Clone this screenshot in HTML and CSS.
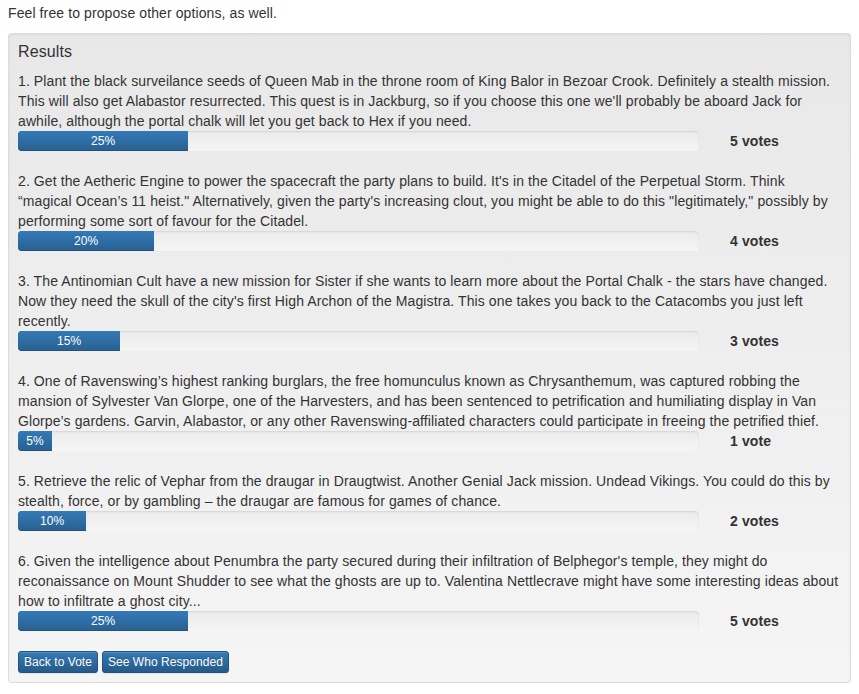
FILE: index.html
```html
<!DOCTYPE html>
<html>
<head>
<meta charset="utf-8">
<link rel="stylesheet" href="styles.css">
</head>
<body>
<p class="intro">Feel free to propose other options, as well.</p>
<div class="well">
  <h4 class="title">Results</h4>

  <div class="item">
    <p class="desc">1. Plant the black surveilance seeds of Queen Mab in the throne room of King Balor in Bezoar Crook. Definitely a stealth mission.<br>This will also get Alabastor resurrected. This quest is in Jackburg, so if you choose this one we'll probably be aboard Jack for<br>awhile, although the portal chalk will let you get back to Hex if you need.</p>
    <div class="row">
      <div class="progress"><div class="bar" style="width:25%">25%</div></div>
      <div class="votes">5 votes</div>
    </div>
  </div>

  <div class="item">
    <p class="desc">2. Get the Aetheric Engine to power the spacecraft the party plans to build. It's in the Citadel of the Perpetual Storm. Think<br>“magical Ocean’s 11 heist." Alternatively, given the party's increasing clout, you might be able to do this "legitimately," possibly by<br>performing some sort of favour for the Citadel.</p>
    <div class="row">
      <div class="progress"><div class="bar" style="width:20%">20%</div></div>
      <div class="votes">4 votes</div>
    </div>
  </div>

  <div class="item">
    <p class="desc">3. The Antinomian Cult have a new mission for Sister if she wants to learn more about the Portal Chalk - the stars have changed.<br>Now they need the skull of the city's first High Archon of the Magistra. This one takes you back to the Catacombs you just left<br>recently.</p>
    <div class="row">
      <div class="progress"><div class="bar" style="width:15%">15%</div></div>
      <div class="votes">3 votes</div>
    </div>
  </div>

  <div class="item">
    <p class="desc">4. One of Ravenswing’s highest ranking burglars, the free homunculus known as Chrysanthemum, was captured robbing the<br>mansion of Sylvester Van Glorpe, one of the Harvesters, and has been sentenced to petrification and humiliating display in Van<br>Glorpe’s gardens. Garvin, Alabastor, or any other Ravenswing-affiliated characters could participate in freeing the petrified thief.</p>
    <div class="row">
      <div class="progress"><div class="bar" style="width:5%">5%</div></div>
      <div class="votes">1 vote</div>
    </div>
  </div>

  <div class="item">
    <p class="desc">5. Retrieve the relic of Vephar from the draugar in Draugtwist. Another Genial Jack mission. Undead Vikings. You could do this by<br>stealth, force, or by gambling – the draugar are famous for games of chance.</p>
    <div class="row">
      <div class="progress"><div class="bar" style="width:10%">10%</div></div>
      <div class="votes">2 votes</div>
    </div>
  </div>

  <div class="item">
    <p class="desc">6. Given the intelligence about Penumbra the party secured during their infiltration of Belphegor's temple, they might do<br>reconaissance on Mount Shudder to see what the ghosts are up to. Valentina Nettlecrave might have some interesting ideas about<br>how to infiltrate a ghost city...</p>
    <div class="row">
      <div class="progress"><div class="bar" style="width:25%">25%</div></div>
      <div class="votes">5 votes</div>
    </div>
  </div>

  <div class="actions">
    <button class="btn">Back to Vote</button>
    <button class="btn">See Who Responded</button>
  </div>
</div>
</body>
</html>
```
FILE: styles.css
```css
* { box-sizing: border-box; }
html, body { background: #fff; }
body {
  margin: 0 8px;
  padding-top: 3px;
  font-family: "Liberation Sans", Arial, Helvetica, sans-serif;
  font-size: 14px;
  line-height: 20px;
  letter-spacing: 0.1px;
  color: #333;
}
.intro { margin: 0 0 10px 0; }
.well {
  padding: 9px;
  border: 1px solid #dcdcdc;
  border-radius: 3px;
  background-color: #f5f5f5;
  background-image: linear-gradient(to bottom, #e8e8e8 0, #f5f5f5 100%);
  box-shadow: inset 0 1px 3px rgba(0,0,0,.05), 0 1px 0 rgba(255,255,255,.1);
}
.title {
  margin: 0 0 10px 0;
  font-size: 16px;
  line-height: 18px;
  font-weight: normal;
}
.item { margin-bottom: 20px; }
.desc { margin: 0; white-space: nowrap; }
.row {
  display: grid;
  grid-template-columns: 681px 1fr;
  align-items: center;
}
.progress {
  height: 20px;
  border-radius: 4px;
  overflow: hidden;
  background-color: #f5f5f5;
  background-image: linear-gradient(to bottom, #ebebeb 0, #f5f5f5 100%);
  box-shadow: inset 0 1px 2px rgba(0,0,0,.1);
}
.bar {
  height: 100%;
  font-size: 12px;
  line-height: 20px;
  color: #fff;
  text-align: center;
  background-color: #337ab7;
  background-image: linear-gradient(to bottom, #337ab7 0, #286090 100%);
  box-shadow: inset 0 -1px 0 rgba(0,0,0,.15);
}
.votes {
  padding-left: 31px;
  font-weight: bold;
}
.actions {
  display: flex;
  gap: 4px;
}
.btn {
  font-family: "Liberation Sans", Arial, Helvetica, sans-serif;
  font-size: 12px;
  line-height: 18px;
  letter-spacing: 0.05px;
  padding: 1px 5px;
  border: 1px solid #245580;
  border-radius: 3px;
  color: #fff;
  background-color: #265a88;
  background-image: linear-gradient(to bottom, #337ab7 0, #265a88 100%);
  text-shadow: 0 -1px 0 rgba(0,0,0,.2);
  box-shadow: inset 0 1px 0 rgba(255,255,255,.15), 0 1px 1px rgba(0,0,0,.075);
  cursor: pointer;
}
```
